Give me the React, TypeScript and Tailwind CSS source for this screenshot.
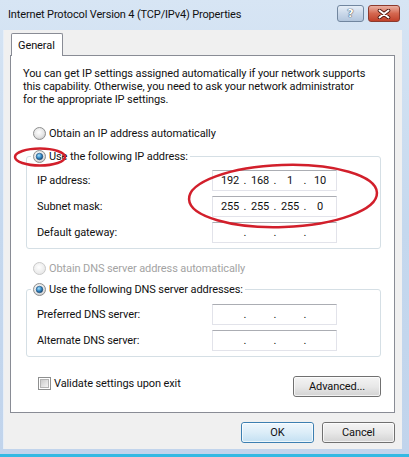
import { Fragment } from "react";

function Radio({ checked = false, disabled = false }: { checked?: boolean; disabled?: boolean }) {
  return (
    <svg width="13" height="13" viewBox="0 0 13 13" className="shrink-0">
      <defs>
        <radialGradient id="rbg" cx="45%" cy="40%" r="65%">
          <stop offset="0" stopColor="#ffffff" />
          <stop offset="0.6" stopColor="#e6e6e6" />
          <stop offset="1" stopColor="#c4c4c4" />
        </radialGradient>
        <radialGradient id="rbgd" cx="45%" cy="40%" r="65%">
          <stop offset="0" stopColor="#ffffff" />
          <stop offset="1" stopColor="#e4e4e4" />
        </radialGradient>
        <radialGradient id="rdot" cx="40%" cy="35%" r="70%">
          <stop offset="0" stopColor="#a8e0fa" />
          <stop offset="0.5" stopColor="#3b8fcc" />
          <stop offset="1" stopColor="#0d3d66" />
        </radialGradient>
      </defs>
      <circle cx="6.5" cy="6.5" r="6" fill={disabled ? "url(#rbgd)" : "url(#rbg)"} stroke={disabled ? "#c9c9c9" : "#8e8f8f"} strokeWidth="1" />
      {checked && <circle cx="6.5" cy="6.5" r="3.3" fill="url(#rdot)" stroke="#1f4e78" strokeWidth="0.6" />}
    </svg>
  );
}

function Checkbox() {
  return (
    <div className="w-[13px] h-[13px] border border-[#8e8f8f] bg-white p-[1px] shrink-0">
      <div className="w-full h-full bg-gradient-to-br from-[#cbcbcb] to-[#f4f4f4] border border-[#b4b4b4]" />
    </div>
  );
}

function IpInput({ v }: { v?: string[] }) {
  return (
    <div className="w-[125px] h-[21px] bg-white border border-[#e2e3ea] border-t-[#abadb3] flex items-center pl-[4px] shrink-0">
      {[0, 1, 2, 3].map((i) => (
        <Fragment key={i}>
          <span className="w-[26px] text-center leading-[13px]">{v ? v[i] : ""}</span>
          {i < 3 && <span className="w-[4px] text-center leading-[13px]">.</span>}
        </Fragment>
      ))}
    </div>
  );
}

function FieldRow({ label, v }: { label: string; v?: string[] }) {
  return (
    <div className="flex items-center h-[21px] pl-[10px]">
      <span className="w-[175px] leading-[13px]">{label}</span>
      <IpInput v={v} />
    </div>
  );
}

function WinButton({ label, primary = false, w }: { label: string; primary?: boolean; w: string }) {
  return (
    <div
      className={
        "h-[21px] rounded-[3px] border flex items-center justify-center " +
        w +
        " " +
        (primary
          ? "border-[#3c7fb1] bg-gradient-to-b from-[#eef7fd] via-[#dcedf8] to-[#c3e0f2]"
          : "border-[#707070] bg-gradient-to-b from-[#f4f4f4] via-[#e8e8e8] to-[#d3d3d3]")
      }
    >
      <div className="w-full h-full rounded-[2px] border border-white/70 flex items-center justify-center leading-[13px]">
        {label}
      </div>
    </div>
  );
}

export default function App() {
  return (
    <div className="relative w-[409px] h-[457px] overflow-hidden flex flex-col bg-gradient-to-b from-[#d7e5f4] via-[#c5d8ee] to-[#c1d4ec] font-['Roboto',sans-serif] text-[11px] tracking-[-0.1px] text-[#111]">
      {/* Title bar */}
      <div className="h-[30px] flex items-start shrink-0">
        <div className="ml-[8px] mt-[7px] leading-[16px] whitespace-nowrap text-[11px] tracking-[-0.15px]">
          Internet Protocol Version 4 (TCP/IPv4) Properties
        </div>
        <div className="ml-auto mt-[5px] mr-[9px] flex gap-[4px]">
          <div className="w-[27px] h-[17px] rounded-[3px] border border-[#71869f] bg-gradient-to-b from-[#e6eef7] via-[#cad8e9] to-[#b3c6dd] flex items-center justify-center">
            <span className="font-['DejaVu_Sans',sans-serif] font-bold text-[11px] leading-[12px] text-white [text-shadow:0_0_1px_#1e2f48,0_0_1px_#1e2f48]">?</span>
          </div>
          <div className="w-[32px] h-[17px] rounded-[3px] border border-[#8c3a2e] bg-gradient-to-b from-[#eab1a4] via-[#d4674f] to-[#c1412a] flex items-center justify-center">
            <svg width="14" height="10" viewBox="0 0 14 10">
              <path d="M2.5 1.5 L11.5 8.5 M11.5 1.5 L2.5 8.5" stroke="#4a140c" strokeWidth="3.6" strokeLinecap="round" />
              <path d="M2.5 1.5 L11.5 8.5 M11.5 1.5 L2.5 8.5" stroke="#ffffff" strokeWidth="2" strokeLinecap="round" />
            </svg>
          </div>
        </div>
      </div>

      {/* Client area */}
      <div className="ml-[3px] w-[399px] h-[419px] border-l border-[#e6eef8] bg-[#f0f0f0] shrink-0 flex flex-col">
        {/* Tab */}
        <div className="pt-[3px] pl-[7px] flex">
          <div className="relative z-10 w-[52px] h-[23px] bg-white border border-b-0 border-[#898c95] rounded-t-[2px] flex items-center pl-[6px] leading-[13px]">
            General
          </div>
        </div>
        {/* Panel */}
        <div className="-mt-[1px] ml-[6px] w-[385px] h-[358px] bg-white border border-[#898c95] flex flex-col">
          <div className="pt-[11px] pl-[12px] leading-[13px] whitespace-nowrap">
            <div>You can get IP settings assigned automatically if your network supports</div>
            <div>this capability. Otherwise, you need to ask your network administrator</div>
            <div>for the appropriate IP settings.</div>
          </div>

          <div className="mt-[21px] ml-[22px] flex items-center gap-[3px] h-[13px]">
            <Radio />
            <span className="leading-[13px]">Obtain an IP address automatically</span>
          </div>

          <div className="mt-[16px] ml-[15px] w-[355px] border border-[#d5dfe5] rounded-[3px] pb-[5px]">
            <div className="flex">
              <div className="-mt-[8px] ml-[4px] flex items-center gap-[3px] bg-white px-[2px] h-[14px]">
                <Radio checked />
                <span className="leading-[13px]">Use the following IP address:</span>
              </div>
            </div>
            <div className="mt-[7px] flex flex-col gap-[5px]">
              <FieldRow label="IP address:" v={["192", "168", "1", "10"]} />
              <FieldRow label="Subnet mask:" v={["255", "255", "255", "0"]} />
              <FieldRow label="Default gateway:" />
            </div>
          </div>

          <div className="mt-[13px] ml-[22px] flex items-center gap-[3px] h-[13px] text-[#a3a3a3]">
            <Radio disabled />
            <span className="leading-[13px]">Obtain DNS server address automatically</span>
          </div>

          <div className="mt-[14px] ml-[15px] w-[355px] border border-[#d5dfe5] rounded-[3px] pb-[5px]">
            <div className="flex">
              <div className="-mt-[8px] ml-[4px] flex items-center gap-[3px] bg-white px-[2px] h-[14px]">
                <Radio checked />
                <span className="leading-[13px]">Use the following DNS server addresses:</span>
              </div>
            </div>
            <div className="mt-[8px] flex flex-col gap-[5px]">
              <FieldRow label="Preferred DNS server:" />
              <FieldRow label="Alternate DNS server:" />
            </div>
          </div>

          <div className="mt-[19px] flex items-start">
            <div className="ml-[27px] mt-[1px] flex items-center gap-[3px] h-[13px]">
              <Checkbox />
              <span className="leading-[13px]">Validate settings upon exit</span>
            </div>
            <div className="ml-auto mr-[13px]">
              <WinButton label="Advanced..." w="w-[88px]" />
            </div>
          </div>
        </div>

        {/* Bottom buttons */}
        <div className="mt-[9px] ml-[6px] w-[385px] flex justify-end gap-[8px]">
          <WinButton label="OK" primary w="w-[73px]" />
          <WinButton label="Cancel" w="w-[73px]" />
        </div>
      </div>

      <div className="mt-[5px] h-[3px] bg-[#33b9e3] shrink-0" />

      {/* Red annotation ellipses */}
      <svg className="absolute inset-0 pointer-events-none" width="409" height="457" viewBox="0 0 409 457">
        <ellipse cx="40" cy="157" rx="25" ry="8.5" fill="none" stroke="#d21f2b" strokeWidth="2.5" />
        <ellipse cx="283" cy="196" rx="94" ry="31" fill="none" stroke="#d21f2b" strokeWidth="2.5" transform="rotate(-2 283 196)" />
      </svg>
    </div>
  );
}
